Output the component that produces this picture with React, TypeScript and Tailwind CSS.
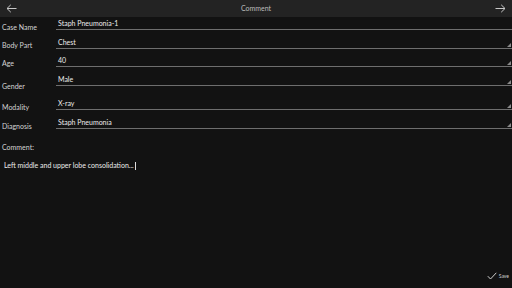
import React from "react";

const font = { fontFamily: 'Lato, "Open Sans", sans-serif' };

function Tri() {
  return (
    <svg className="absolute right-[1px] bottom-[1px]" width="4" height="4" viewBox="0 0 4 4">
      <polygon points="4,0 4,4 0,4" fill="#8a8a8a" />
    </svg>
  );
}

type RowProps = { label: string; value: string; h: string; lm: string; tri?: boolean };

function Row({ label, value, h, lm, tri = true }: RowProps) {
  return (
    <div className={`flex items-end ${h}`}>
      <div className={`w-[56px] shrink-0 pl-[2px] text-[7px] leading-[9px] text-[#d4d4d4] ${lm}`}>{label}</div>
      <div className="relative flex-1 border-b border-[#6e6e6e] pr-[2px]">
        <div className="pl-[2px] pb-[1px] text-[7px] leading-[9px] text-[#ececec]">{value}</div>
        {tri && <Tri />}
      </div>
    </div>
  );
}

export default function App() {
  return (
    <div className="w-[512px] h-[288px] bg-[#121212] flex flex-col overflow-hidden antialiased" style={font}>
      <div className="h-[17px] bg-[#232323] flex items-center justify-between shrink-0 px-[6px]">
        <svg width="11" height="9" viewBox="0 0 11 9">
          <path d="M10.5 4.5H1M4.8 0.8L1 4.5L4.8 8.2" stroke="#c8c8c8" strokeWidth="1" fill="none" />
        </svg>
        <div className="text-[7px] leading-[9px] text-[#bdbdbd]">Comment</div>
        <svg width="11" height="9" viewBox="0 0 11 9">
          <path d="M0.5 4.5H10M6.2 0.8L10 4.5L6.2 8.2" stroke="#c8c8c8" strokeWidth="1" fill="none" />
        </svg>
      </div>
      <div className="flex flex-col">
        <Row label="Case Name" value="Staph Pneumonia-1" h="h-[13px]" lm="mb-[-2px]" tri={false} />
        <Row label="Body Part" value="Chest" h="h-[19px]" lm="mb-[-1px]" />
        <Row label="Age" value="40" h="h-[18px]" lm="mb-[-1px]" />
        <Row label="Gender" value="Male" h="h-[19px]" lm="mb-[-5px]" />
        <Row label="Modality" value="X-ray" h="h-[24px]" lm="mb-[-2px]" />
        <Row label="Diagnosis" value="Staph Pneumonia" h="h-[19px]" lm="mb-[-2px]" />
      </div>
      <div className="mt-[14px] pl-[2px] text-[7px] leading-[9px] text-[#d4d4d4]">Comment:</div>
      <div className="mt-[9px] pl-[4px] text-[7px] leading-[9px] text-[#ececec] flex items-center">
        <span>Left middle and upper lobe consolidation...</span>
        <span className="inline-block w-[1px] h-[8px] bg-[#dcdcdc] ml-[1px]" />
      </div>
      <div className="flex-1" />
      <div className="flex justify-end items-center gap-[2px] pr-[3px] pb-[8px]">
        <svg width="10" height="8" viewBox="0 0 10 8">
          <path d="M0.8 4.2L3.5 7L9.3 0.8" stroke="#cfcfcf" strokeWidth="1" fill="none" />
        </svg>
        <span className="text-[5px] leading-[7px] text-[#cfcfcf]">Save</span>
      </div>
    </div>
  );
}
